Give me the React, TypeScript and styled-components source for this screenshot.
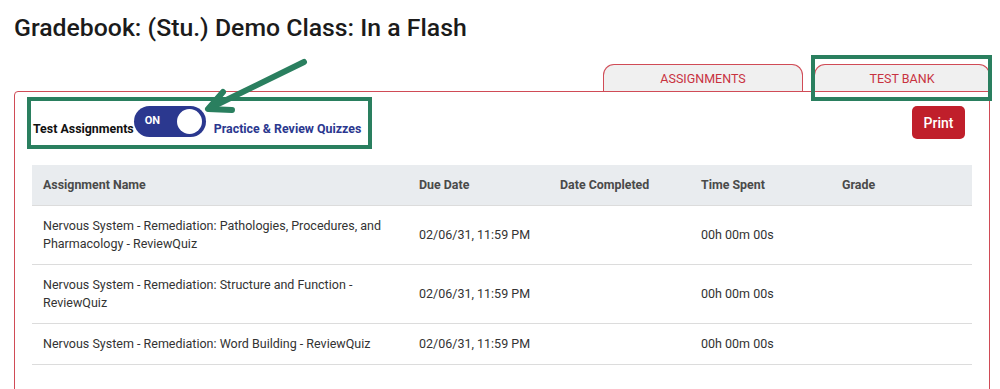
import styled, { createGlobalStyle } from "styled-components";

const GlobalStyle = createGlobalStyle`
    html, body {
        margin: 0;
        padding: 0;
        background: #fff;
        font-family: Roboto, "Liberation Sans", sans-serif;
    }
`

const red = '#d04b56';
const green = '#2a7f5f';
const navy = '#2b388f';

const Page = styled.div`
    position: relative;
    width: 1000px;
    height: 389px;
    overflow: hidden;
    padding: 14px 10px 0 14px;
    box-sizing: border-box;
`

const Title = styled.h1`
    margin: 0;
    font-size: 24.8px;
    line-height: 28px;
    font-weight: 500;
    color: #1b1b1b;
`

const Tabs = styled.div`
    display: flex;
    justify-content: flex-end;
    gap: 11px;
    margin-top: 22px;
`

const Tab = styled.div<{ $width: number }>`
    position: relative;
    width: ${props => props.$width}px;
    height: 27px;
    box-sizing: border-box;
    border: 1px solid ${red};
    border-bottom: none;
    border-radius: 11px 11px 0 0;
    background: #f0f0f0;
    color: #c8323f;
    font-size: 12.5px;
    display: flex;
    align-items: center;
    justify-content: center;
    padding-top: 1px;
`

const TabHighlight = styled.span`
    position: absolute;
    top: -10px;
    left: -4px;
    right: -3px;
    bottom: -10px;
    border: 4px solid ${green};
    pointer-events: none;
`

const Panel = styled.div`
    border: 1px solid ${red};
    border-radius: 4px 0 0 0;
    height: 320px;
    box-sizing: border-box;
`

const Toolbar = styled.div`
    display: flex;
    justify-content: space-between;
    align-items: flex-start;
    margin: 5px 24px 0 12px;
`

const ToggleGroup = styled.div`
    display: flex;
    align-items: center;
    height: 52px;
    box-sizing: border-box;
    border: 4px solid ${green};
    padding: 0 7px 0 2px;
`

const Label = styled.span<{ $accent?: boolean }>`
    font-size: 12.4px;
    font-weight: 700;
    color: ${props => props.$accent ? navy : '#111'};
    margin-top: 10px;
    margin-left: ${props => props.$accent ? '8px' : '0'};
`

const Switch = styled.div`
    position: relative;
    width: 72px;
    height: 31px;
    box-sizing: border-box;
    border-radius: 16px;
    background: ${navy};
    color: #fff;
    font-size: 11px;
    font-weight: 700;
    display: flex;
    align-items: center;
    padding-left: 11px;
    padding-bottom: 2px;
    margin-top: -3px;
`

const Knob = styled.span`
    position: absolute;
    right: 4px;
    top: 3px;
    width: 25px;
    height: 25px;
    border-radius: 50%;
    background: #fff;
`

const PrintButton = styled.button`
    margin-top: 9px;
    width: 53px;
    height: 33px;
    border: none;
    border-radius: 5px;
    background: #c01f2b;
    color: #fff;
    font-family: Roboto, sans-serif;
    font-size: 14px;
    font-weight: 500;
    cursor: pointer;
`

const Table = styled.div`
    margin: 16px 17px 0 17px;
    display: grid;
    grid-template-columns: 376px repeat(4, 141px);
`

const HeadCell = styled.div`
    background: #e9ecef;
    padding: 11px 11px;
    font-size: 12.4px;
    line-height: 18px;
    font-weight: 700;
    color: #4a4a4a;
    border-bottom: 1px solid #dcdcdc;
`

const Cell = styled.div`
    padding: 11px 11px;
    font-size: 12.5px;
    line-height: 18px;
    color: #333;
    border-bottom: 1px solid #dcdcdc;
    display: flex;
    align-items: center;
`

const ArrowSvg = styled.svg`
    position: absolute;
    left: 195px;
    top: 52px;
    pointer-events: none;
`

const rows = [
    'Nervous System - Remediation: Pathologies, Procedures, and Pharmacology - ReviewQuiz',
    'Nervous System - Remediation: Structure and Function - ReviewQuiz',
    'Nervous System - Remediation: Word Building - ReviewQuiz',
];

export default function App() {
    return (
        <>
            <GlobalStyle />
            <Page>
                <Title>Gradebook: (Stu.) Demo Class: In a Flash</Title>
                <Tabs>
                    <Tab $width={200}>ASSIGNMENTS</Tab>
                    <Tab $width={176}>TEST BANK<TabHighlight /></Tab>
                </Tabs>
                <Panel>
                    <Toolbar>
                        <ToggleGroup>
                            <Label>Test Assignments</Label>
                            <Switch>ON<Knob /></Switch>
                            <Label $accent>Practice &amp; Review Quizzes</Label>
                        </ToggleGroup>
                        <PrintButton>Print</PrintButton>
                    </Toolbar>
                    <Table>
                        <HeadCell>Assignment Name</HeadCell>
                        <HeadCell>Due Date</HeadCell>
                        <HeadCell>Date Completed</HeadCell>
                        <HeadCell>Time Spent</HeadCell>
                        <HeadCell>Grade</HeadCell>
                        {rows.map(name => (
                            <>
                                <Cell key={name}>{name}</Cell>
                                <Cell>02/06/31, 11:59 PM</Cell>
                                <Cell />
                                <Cell>00h 00m 00s</Cell>
                                <Cell />
                            </>
                        ))}
                    </Table>
                </Panel>
                <ArrowSvg width="120" height="70" viewBox="195 52 120 70">
                    <g fill="none" stroke={green} strokeWidth="6" strokeLinecap="round" strokeLinejoin="round">
                        <line x1="304" y1="62" x2="210" y2="108" />
                        <polyline points="223,92 208,109 232,110" />
                    </g>
                </ArrowSvg>
            </Page>
        </>
    );
}
